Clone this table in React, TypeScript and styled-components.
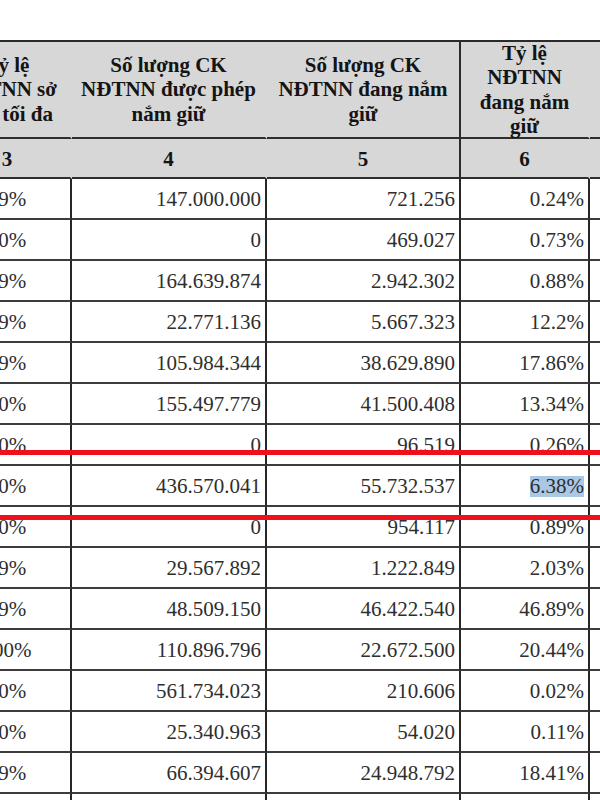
import React from "react";
import styled, { createGlobalStyle } from "styled-components";

const Global = createGlobalStyle`
  html, body { margin: 0; padding: 0; background: #ffffff; }
  body { font-family: "Liberation Serif", "Times New Roman", serif; }
`;

const Page = styled.div`
  position: relative;
  width: 600px;
  height: 800px;
  overflow: hidden;
  background: #fff;
  padding-top: 40px;
  box-sizing: border-box;
`;

const Grid = styled.div`
  display: grid;
  grid-template-columns: 128px 195px 194px 129px 120px;
  margin-left: -56px;
  border-top: 2px solid #2a2a2a;
`;

const HeadCell = styled.div<{ $line?: boolean }>`
  box-sizing: border-box;
  height: 97px;
  background: #d7d7d7;
  border-bottom: 2px solid #2e2e2e;
  border-right: 2px solid ${(p) => (p.$line ? "#2a2a2a" : "transparent")};
  display: flex;
  align-items: center;
  justify-content: center;
  text-align: center;
  font-weight: bold;
  font-size: 21px;
  line-height: 24.5px;
  color: #141414;
  white-space: nowrap;
`;

const NumCell = styled(HeadCell)`
  height: 40px;
  padding-top: 2px;
`;

const Cell = styled.div<{ $align?: "left" | "right" | "center" }>`
  box-sizing: border-box;
  height: 41px;
  border-bottom: 2px solid #3c3c3c;
  border-right: 2px solid #262626;
  display: flex;
  align-items: center;
  justify-content: ${(p) =>
    p.$align === "center" ? "center" : p.$align === "left" ? "flex-start" : "flex-end"};
  padding: 1px 4px 0 4px;
  font-size: 21px;
  color: #2e2e2e;
  white-space: nowrap;
`;

const Highlight = styled.span`
  display: inline-block;
  background: #a9c8e6;
  line-height: 21px;
`;

const RedLine = styled.div<{ $top: number }>`
  position: absolute;
  left: 0;
  right: 0;
  top: ${(p) => p.$top}px;
  height: 5px;
  background: #f0101c;
`;

type Row = [string, string, string, string];

const rows: Row[] = [
  ["49%", "147.000.000", "721.256", "0.24%"],
  ["50%", "0", "469.027", "0.73%"],
  ["49%", "164.639.874", "2.942.302", "0.88%"],
  ["49%", "22.771.136", "5.667.323", "12.2%"],
  ["49%", "105.984.344", "38.629.890", "17.86%"],
  ["50%", "155.497.779", "41.500.408", "13.34%"],
  ["50%", "0", "96.519", "0.26%"],
  ["30%", "436.570.041", "55.732.537", "6.38%"],
  ["50%", "0", "954.117", "0.89%"],
  ["49%", "29.567.892", "1.222.849", "2.03%"],
  ["49%", "48.509.150", "46.422.540", "46.89%"],
  ["100%", "110.896.796", "22.672.500", "20.44%"],
  ["50%", "561.734.023", "210.606", "0.02%"],
  ["50%", "25.340.963", "54.020", "0.11%"],
  ["49%", "66.394.607", "24.948.792", "18.41%"],
  ["49%", "", "", ""],
];

export default function App() {
  return (
    <Page>
      <Global />
      <Grid>
        <HeadCell>
          Tỷ lệ
          <br />
          NĐTNN sở
          <br />
          hữu tối đa
        </HeadCell>
        <HeadCell>
          Số lượng CK
          <br />
          NĐTNN được phép
          <br />
          nắm giữ
        </HeadCell>
        <HeadCell $line>
          Số lượng CK
          <br />
          NĐTNN đang nắm
          <br />
          giữ
        </HeadCell>
        <HeadCell>
          Tỷ lệ
          <br />
          NĐTNN
          <br />
          đang nắm
          <br />
          giữ
        </HeadCell>
        <HeadCell>
          Ghi chú
        </HeadCell>

        <NumCell>3</NumCell>
        <NumCell>4</NumCell>
        <NumCell $line>5</NumCell>
        <NumCell>6</NumCell>
        <NumCell>7</NumCell>

        {rows.map((r, i) => (
          <React.Fragment key={i}>
            <Cell $align="center">{r[0]}</Cell>
            <Cell>{r[1]}</Cell>
            <Cell>{r[2]}</Cell>
            <Cell>{i === 7 ? <Highlight>{r[3]}</Highlight> : r[3]}</Cell>
            <Cell />
          </React.Fragment>
        ))}
      </Grid>
      <RedLine $top={450} />
      <RedLine $top={515} />
    </Page>
  );
}
